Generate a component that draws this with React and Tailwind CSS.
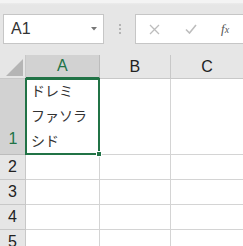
import React from 'react';

const jp = { fontFamily: '"Noto Sans CJK JP", "Noto Sans", sans-serif' };
const sans = { fontFamily: '"Liberation Sans", Arial, sans-serif' };

const rows = [
  { n: 2, h: 'h-[25px]' },
  { n: 3, h: 'h-[25px]' },
  { n: 4, h: 'h-[25px]' },
  { n: 5, h: 'h-[25px]' },
];

export default function App() {
  return (
    <div className="w-[243px] h-[246px] overflow-hidden bg-[#e6e6e6] flex flex-col" style={sans}>
      {/* ribbon edge */}
      <div className="h-[3px] shrink-0 bg-[#f4f4f4]" />
      <div className="h-[2px] shrink-0 bg-gradient-to-b from-[#ececec] to-[#e6e6e6]" />

      {/* name box + formula bar */}
      <div className="flex items-center shrink-0 mt-[9px] h-[30px]">
        <div className="ml-[3px] w-[101px] h-full bg-white border border-[#c6c6c6] flex items-center justify-between pl-[7px] pr-[6px]">
          <span className="text-[16px] text-[#333] leading-none">A1</span>
          <svg width="6" height="4" viewBox="0 0 6 4">
            <path d="M0 0h6L3 3.5z" fill="#777" />
          </svg>
        </div>
        <div className="w-[31px] flex flex-col items-center gap-[2px]">
          <span className="w-[2px] h-[2px] bg-[#b4b4b4]" />
          <span className="w-[2px] h-[2px] bg-[#b4b4b4]" />
          <span className="w-[2px] h-[2px] bg-[#b4b4b4]" />
        </div>
        <div className="flex-1 h-full bg-white border border-[#c6c6c6] border-r-0 flex items-center">
          <svg className="ml-[13px]" width="11" height="11" viewBox="0 0 11 11">
            <path d="M1 1l9 9M10 1l-9 9" stroke="#bdbdbd" strokeWidth="1.3" />
          </svg>
          <svg className="ml-[25px]" width="12" height="10" viewBox="0 0 12 10">
            <path d="M1 5.5l3.5 3.5L11 1" stroke="#bdbdbd" strokeWidth="1.6" fill="none" />
          </svg>
          <span className="ml-[24px] text-[13px] italic text-[#555]" style={{ fontFamily: '"Liberation Serif", serif' }}>
            f<span className="text-[10px]">x</span>
          </span>
        </div>
      </div>

      {/* sheet */}
      <div className="mt-[11px] shrink-0 flex flex-col">
        {/* column headers */}
        <div className="flex h-[24px] shrink-0">
          <div className="w-[26px] border-r border-b border-[#c8c8c8] bg-[#e6e6e6] flex items-end justify-end pr-[2px] pb-[2px]">
            <svg width="17" height="17" viewBox="0 0 17 17">
              <path d="M17 0V17H0z" fill="#b5b5b5" />
            </svg>
          </div>
          <div className="w-[74px] bg-[#d2d2d2] border-r border-[#bcbcbc] border-b-2 border-b-[#217346] flex items-center justify-center text-[16px] text-[#217346]">A</div>
          <div className="w-[72px] border-r border-b border-[#c8c8c8] flex items-center justify-center text-[16px] text-[#222]">B</div>
          <div className="w-[72px] border-b border-[#c8c8c8] flex items-center justify-center text-[16px] text-[#222]">C</div>
        </div>

        {/* row 1 */}
        <div className="flex h-[76px] shrink-0 bg-white">
          <div className="w-[26px] bg-[#d2d2d2] border-b border-[#bcbcbc] flex items-end justify-center pb-[3px] text-[16px] text-[#217346]">1</div>
          <div className="relative w-[74px] border-r border-b border-[#d4d4d4] flex flex-col justify-end pl-[5px] pb-[1px] text-[14px] leading-[25px] text-[#333]" style={jp}>
            <span>ドレミ</span>
            <span>ファソラ</span>
            <span>シド</span>
            <div className="absolute -left-[1px] -top-[1px] -right-[1px] -bottom-[1px] border-2 border-[#217346]" />
            <div className="absolute -right-[3px] -bottom-[3px] w-[6px] h-[6px] bg-[#217346] border border-white" />
          </div>
          <div className="w-[72px] border-r border-b border-[#d4d4d4]" />
          <div className="w-[72px] border-b border-[#d4d4d4]" />
        </div>

        {rows.map((r) => (
          <div key={r.n} className={`flex ${r.h} shrink-0 bg-white`}>
            <div className="w-[26px] bg-[#e6e6e6] border-r border-b border-[#c8c8c8] flex items-center justify-center text-[16px] text-[#222]">{r.n}</div>
            <div className="w-[74px] border-r border-b border-[#d4d4d4]" />
            <div className="w-[72px] border-r border-b border-[#d4d4d4]" />
            <div className="w-[72px] border-b border-[#d4d4d4]" />
          </div>
        ))}
      </div>
    </div>
  );
}
